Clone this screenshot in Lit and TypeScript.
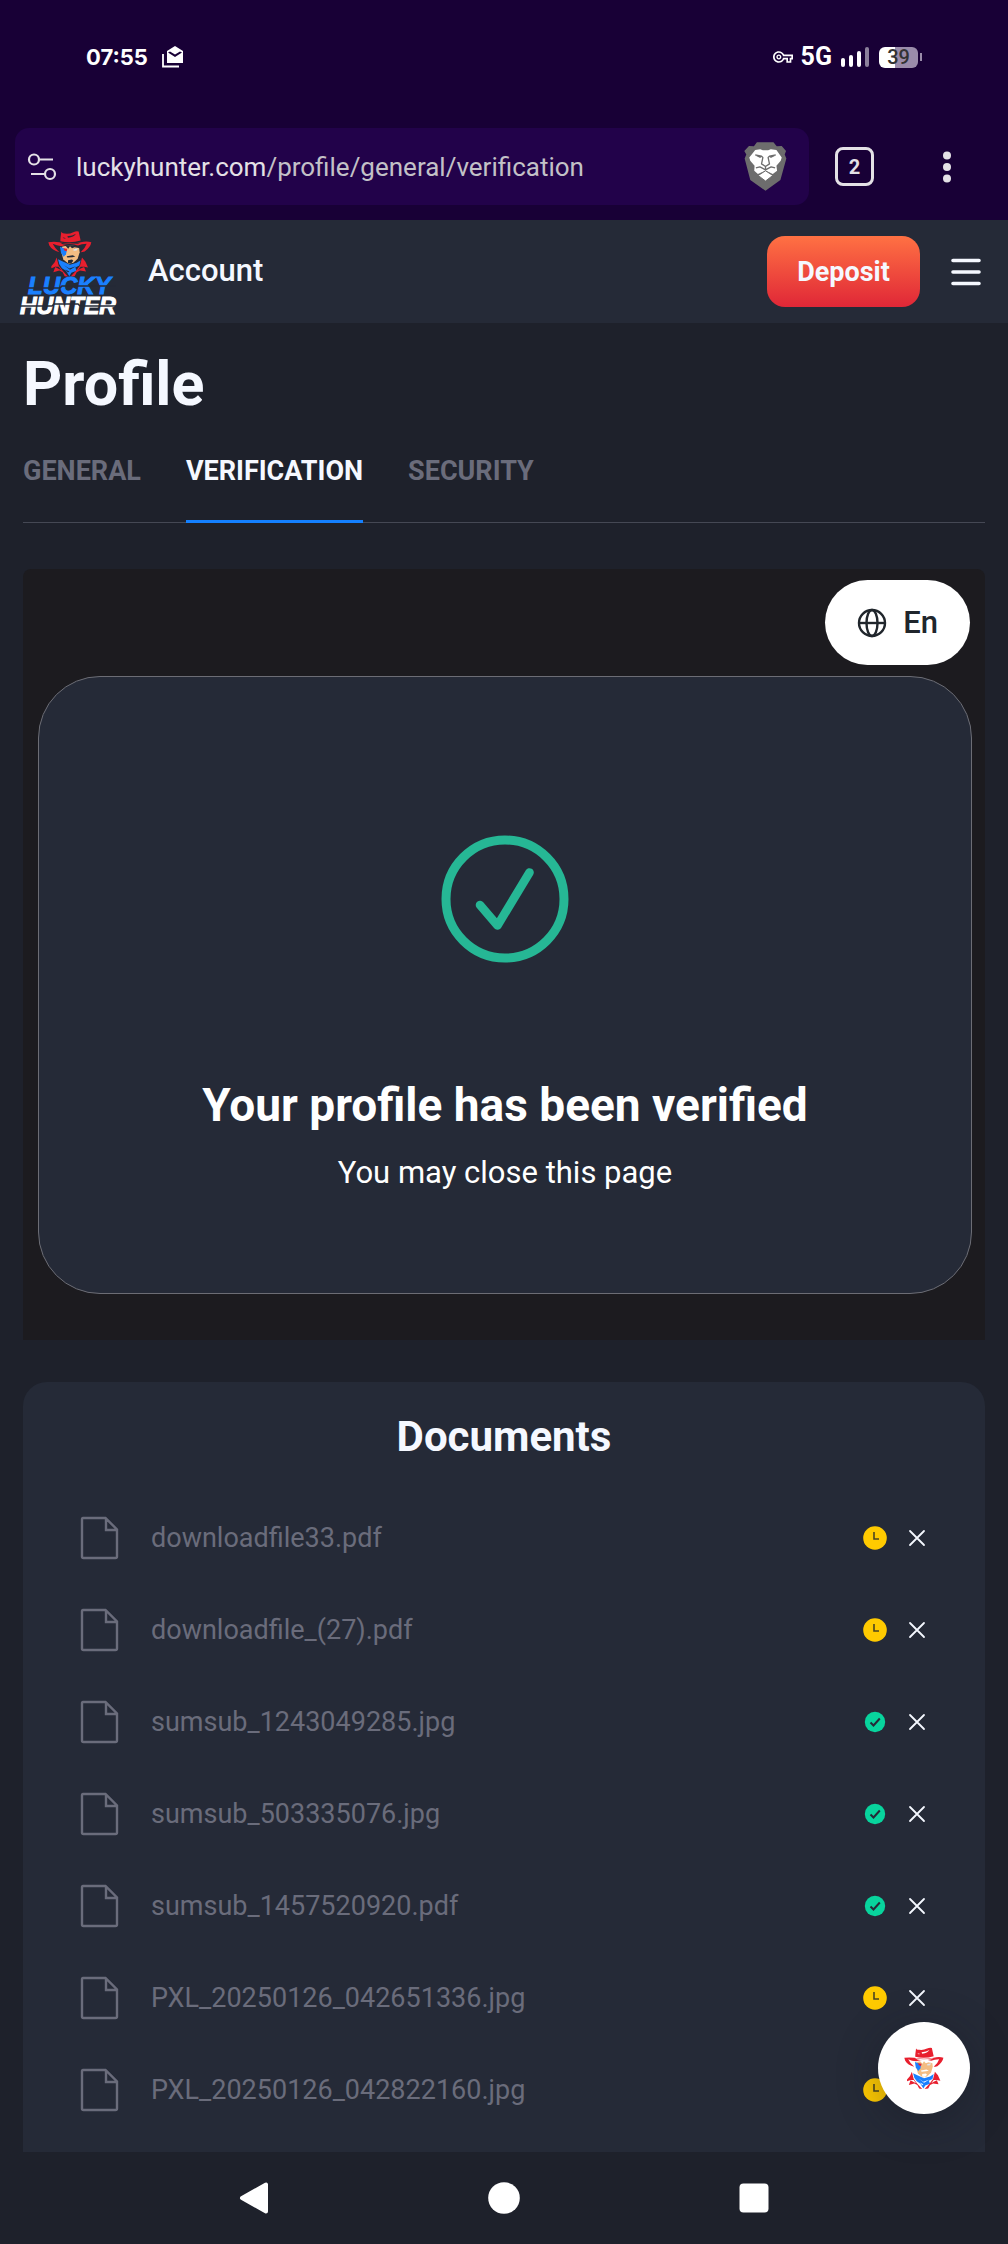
import { LitElement, html, css, svg } from "lit";
import { customElement, property } from "lit/decorators.js";

type Status = "pending" | "approved";
interface Doc {
  name: string;
  status: Status;
}

const DOCUMENTS: Doc[] = [
  { name: "downloadfile33.pdf", status: "pending" },
  { name: "downloadfile_(27).pdf", status: "pending" },
  { name: "sumsub_1243049285.jpg", status: "approved" },
  { name: "sumsub_503335076.jpg", status: "approved" },
  { name: "sumsub_1457520920.pdf", status: "approved" },
  { name: "PXL_20250126_042651336.jpg", status: "pending" },
  { name: "PXL_20250126_042822160.jpg", status: "pending" },
];

/* Cowboy head of the brand mark, drawn on a 132 x 140 grid. The cut-outs take currentColor. */
const cowboy = svg`
  <path fill="#f3bd83" d="M42 50C56 46 78 46 93 50L95 66L89 86L76 98L62 101L46 88L40 66Z"/>
  <path fill="currentColor" d="M52 46H96V54L84 52L73 58L63 59L60 55Z"/>
  <path fill="#f3bd83" d="M61 55L66 48L72 54L84 50L76 60L72 74L62 76L58 70Z"/>
  <path fill="#dfe6ef" d="M76 58L90 54L86 61L77 62Z"/>
  <path fill="#1a80ff" d="M36 50L57 58L54 72L47 80L39 68Z"/>
  <path fill="#e81f2e" d="M46 54L58 56L56 63L49 61Z"/>
  <path fill="currentColor" d="M56 78L74 75L82 79L73 81L58 82ZM60 90L72 88L76 92L70 99L60 99Z"/>
  <path fill="#1a80ff" d="M30 87L46 95L66 104L86 98L98 90L94 106L82 112L86 122L70 128L64 138L54 122L42 114L34 102Z"/>
  <path fill="currentColor" d="M48 105L64 115L84 108L66 119ZM52 118L64 124L60 127Z"/>
  <path fill="#e81f2e" d="M26 82L20 96L10 108L10 114L22 110L16 126L34 121L44 126L50 138L60 139L44 122L32 106Z"/>
  <path fill="#e81f2e" d="M102 82L112 94L120 112L108 110L114 124L96 121L86 126L80 138L68 139L84 122L96 106Z"/>
  <path fill="currentColor" d="M20 110L32 110L40 120L30 115ZM110 110L98 110L90 120L98 115Z"/>
  <path fill="#e81f2e" d="M40 2Q38 9 50 10Q64 12 76 6Q86 1 92 4Q94 14 98 31Q68 40 37 33Q37 24 39 12Z"/>
  <path fill="currentColor" d="M58 18Q74 18 84 11Q78 21 60 23ZM44 21L54 24L48 25Z"/>
  <path fill="#e81f2e" d="M1 36Q18 34 34 36Q66 43 98 36Q116 32 130 36Q128 50 110 64Q103 66 98 66Q112 54 116 41Q100 42 90 46Q64 39 40 48Q26 47 14 41Q20 54 34 66Q12 60 4 46Z"/>
  <path fill="currentColor" d="M36 37Q66 45 98 37L90 41Q66 47 44 42Z"/>`;

const lion = svg`
  <path fill="#6d6d6d" d="M38 1H88L98 13L113 12L126 27L122 38L127 50L109 115L64 147L18 115L1 50L6 38L0 27L14 12L29 13Z"/>
  <path fill="#fff" d="M33 24L48 22L56 25H72L80 22L97 24L113 47L110 57L97 72L99 87L86 97L64 86L41 97L30 87L31 72L18 57L15 47Z"/>
  <path fill="#fff" stroke="#6d6d6d" stroke-width="3" d="M64 87L86 101L64 118L42 101Z"/>
  <path fill="none" stroke="#6d6d6d" stroke-width="4" stroke-linejoin="round" d="M33 39L52 43L56 47L52 66L64 74L76 66L72 47L76 43L95 39M64 74V85M64 84L47 75L35 78M64 84L81 75L93 78"/>
  <path fill="#6d6d6d" d="M33 41L48 48L53 43ZM95 41L80 48L75 43Z"/>`;

@customElement("status-badge")
export class StatusBadge extends LitElement {
  @property() status: Status = "pending";

  static styles = css`
    :host { display: block; width: 24px; height: 24px; }
    .badge { display: block; width: 24px; height: 24px; }
  `;

  render() {
    return this.status === "pending"
      ? html`<svg class="badge" viewBox="0 0 24 24" role="img" aria-label="Pending">
          <circle cx="12" cy="12" r="11.8" fill="#ffca00" />
          <path d="M11 6v7h5" fill="none" stroke="#4b4420" stroke-width="1.6" />
        </svg>`
      : html`<svg class="badge" viewBox="0 0 24 24" role="img" aria-label="Approved">
          <circle cx="12" cy="12" r="10.2" fill="#08d49d" />
          <path d="M7.5 12.5l3 3 6.300-7" fill="none" stroke="#252a37" stroke-width="2" />
        </svg>`;
  }
}

@customElement("document-row")
export class DocumentRow extends LitElement {
  @property({ attribute: false }) doc!: Doc;

  static styles = css`
    :host { display: flex; align-items: center; height: 92px; padding: 0 56px; }
    .file { width: 40px; height: 44px; flex: none; }
    .name { flex: 1; margin-left: 32px; font-size: 27px; line-height: 36px; color: #6a6c7b; }
    .remove {
      display: flex; align-items: center; justify-content: center;
      width: 24px; height: 24px; margin-left: 18px; padding: 0; border: 0; background: none;
    }
    .cross { width: 18px; height: 18px; }
  `;

  render() {
    return html`
      <svg class="file" viewBox="0 0 40 44" fill="none" stroke="#6a6c7b" stroke-width="2.4" aria-hidden="true">
        <path d="M4 2H26.500L38 13.500V40.500Q38 42 36.500 42H4.500Q3 42 3 40.500V3.500Q3 2 4 2ZM27 2.500V14H38" />
      </svg>
      <span class="name">${this.doc.name}</span>
      <status-badge status=${this.doc.status}></status-badge>
      <button class="remove" aria-label="Remove">
        <svg class="cross" viewBox="0 0 18 18" stroke="#f5f8ff" stroke-width="1.8" stroke-linecap="round">
          <path d="M2 2l14 14M16 2L2 16" />
        </svg>
      </button>
    `;
  }
}

@customElement("app-root")
export class AppRoot extends LitElement {
  static styles = css`
    :host {
      display: flex; flex-direction: column; min-height: 100vh;
      font-family: Roboto, "Liberation Sans", sans-serif;
      background: #1e212b; color: #f5f8ff;
    }
    * { box-sizing: border-box; }
    button { font-family: inherit; border: 0; padding: 0; margin: 0; background: none; color: inherit; }
    a { color: inherit; text-decoration: none; }
    svg { display: block; flex: none; }
    h1, h2, p, ul { margin: 0; padding: 0; }

    .browser { background: #180036; }
    .status { display: flex; align-items: center; height: 114px; padding: 0 86px; }
    .time { font-family: Inter, sans-serif; font-weight: 700; font-size: 22px; line-height: 28px; color: #fff; }
    .mail { width: 22px; height: 22px; margin-left: 14px; }
    .system { display: flex; align-items: center; margin-left: auto; color: #fff; }
    .key { width: 20px; height: 20px; }
    .network { margin-left: 8px; font-weight: 700; font-size: 25px; line-height: 28px; }
    .signal { width: 28px; height: 20px; margin-left: 9px; }
    .battery {
      display: flex; align-items: center; justify-content: center;
      width: 39px; height: 21px; margin-left: 10px; border-radius: 6px;
      background: linear-gradient(90deg, #fff 16px, #9a8caa 16px);
      color: #333; font-weight: 500; font-size: 20px; line-height: 21px;
    }
    .nib { width: 2px; height: 8px; margin-left: 2px; background: #9a8caa; }

    .toolbar { display: flex; align-items: center; padding: 14px 30px 15px 15px; }
    .address {
      display: flex; align-items: center; flex: 1; height: 77px;
      padding: 0 22px 0 12px; border-radius: 14px; background: #22024a; text-align: left;
    }
    .site { width: 30px; height: 30px; }
    .url { flex: 1; margin-left: 19px; font-size: 26px; line-height: 36px; color: #c3c1c7; }
    .domain { color: #e4e1e6; }
    .lion { width: 43px; height: 49px; }
    .tabcount {
      display: flex; align-items: center; justify-content: center;
      width: 39px; height: 39px; margin-left: 26px; border: 3px solid #e4e1e6; border-radius: 8px;
      color: #e4e1e6; font-weight: 700; font-size: 20px; line-height: 24px;
    }
    .more { width: 62px; height: 40px; margin-left: 42px; }
    .dots { width: 62px; height: 40px; }

    .header { display: flex; align-items: center; height: 103px; padding: 0 27px 0 18px; background: #252a37; }
    .logo { width: 102px; height: 96px; }
    .mark { width: 102px; height: 96px; color: #252a37; }
    .word { font-family: "Liberation Sans", Arial, sans-serif; font-weight: 700; font-style: italic; }
    .section { flex: 1; margin-left: 28px; padding-bottom: 2px; font-size: 31px; line-height: 40px; font-weight: 500; }
    .deposit {
      width: 153px; height: 71px; border-radius: 18px; color: #f5f8ff;
      background: linear-gradient(#ff7143, #e02737);
      font-size: 27px; line-height: 36px; font-weight: 700;
    }
    .menu { margin-left: 31px; }
    .bars { width: 30px; height: 30px; }

    .page {
      position: relative; flex: 1; display: flex; flex-direction: column; padding: 24px 23px 0;
    }
    .title { font-size: 61px; line-height: 74px; font-weight: 700; }
    .tabs { display: flex; gap: 45px; margin-top: 26px; border-bottom: 1px solid #454854; }
    .tab {
      padding: 7px 0 31px; margin-bottom: -1px; border-bottom: 3px solid transparent;
      color: #6a6c7b; font-size: 27px; line-height: 35px; font-weight: 700;
    }
    .tab.active { color: #f5f8ff; border-color: #1480ff; }

    .verify {
      display: flex; flex-direction: column; align-items: flex-end; margin-top: 46px;
      padding: 11px 13px 46px 15px; background: #1c1b1f; border-radius: 8px 8px 0 0;
    }
    .lang {
      display: flex; align-items: center; gap: 16px; height: 85px; margin-right: 2px;
      padding: 0 32px; border-radius: 43px; background: #fff; color: #20262c;
      font-size: 31px; line-height: 40px; font-weight: 500;
    }
    .globe { width: 30px; height: 30px; }
    .card {
      display: flex; flex-direction: column; align-items: center; align-self: stretch;
      margin-top: 11px; padding: 158px 20px 100px; border: 1px solid #6c6d75; border-radius: 62px;
      background: #252a37; text-align: center;
    }
    .check { width: 128px; height: 128px; }
    .verified { margin-top: 112px; font-size: 46px; line-height: 60px; font-weight: 700; color: #fff; }
    .hint { margin-top: 18px; font-size: 31px; line-height: 40px; color: #fff; }

    .documents { flex: 1; margin-top: 42px; padding-top: 30px; border-radius: 24px 24px 0 0; background: #252a37; }
    .heading { font-size: 42px; line-height: 50px; font-weight: 700; text-align: center; margin-bottom: 30px; }
    .list { list-style: none; }

    .chat {
      position: absolute; right: 38px; bottom: 38px; width: 92px; height: 92px;
      display: flex; align-items: center; justify-content: center;
      border-radius: 50%; background: #fff; box-shadow: 0 8px 40px rgba(20, 24, 32, 0.35);
    }
    .face { width: 40px; height: 46px; color: #fff; }

    .system-nav { display: grid; grid-template-columns: repeat(3, 250px); justify-content: center; align-items: center; height: 92px; }
    .nav-button { display: flex; justify-content: center; }
    .nav-icon { width: 32px; height: 32px; }
  `;

  render() {
    return html`
      <header class="browser">
        <div class="status">
          <span class="time">07:55</span>
          <svg class="mail" viewBox="0 0 22 22" aria-hidden="true">
            <path d="M1 8V20.500H17" fill="none" stroke="#fff" stroke-width="1.8" />
            <path d="M13 0L21 5V17H5V5ZM6 6.500L13 11L20 6.500L18 5.500L13 8.500L8 5.500Z" fill="#fff" fill-rule="evenodd" />
          </svg>
          <div class="system">
            <svg class="key" viewBox="0 0 24 24" fill="#fff" aria-hidden="true">
              <path d="M22 19h-6v-4h-2.680c-1.140 2.420-3.600 4-6.320 4-3.860 0-7-3.140-7-7s3.140-7 7-7c2.720 0 5.170 1.580 6.320 4H24v6h-2v4zm-4-2h2v-4h2v-2H11.940l-.23-.67C11.010 8.340 9.110 7 7 7c-2.760 0-5 2.240-5 5s2.240 5 5 5c2.110 0 4.010-1.340 4.710-3.330l.23-.67H18v4zM7 15c-1.650 0-3-1.350-3-3s1.350-3 3-3 3 1.350 3 3-1.350 3-3 3z" />
              <circle cx="7" cy="12" r="1.4" fill="#180036" />
            </svg>
            <span class="network">5G</span>
            <svg class="signal" viewBox="0 0 28 20" fill="#fff" aria-hidden="true">
              <rect x="0" y="11" width="4" height="9" rx="2" />
              <rect x="8" y="8" width="4" height="12" rx="2" />
              <rect x="16" y="4" width="4" height="16" rx="2" />
              <rect x="24" y="0" width="4" height="20" rx="2" fill="#8b7f9b" />
            </svg>
            <span class="battery">39</span><span class="nib"></span>
          </div>
        </div>
        <div class="toolbar">
          <button class="address">
            <svg class="site" viewBox="0 0 30 30" fill="none" stroke="#e4e1e6" stroke-width="2.2" aria-hidden="true">
              <circle cx="7" cy="7.500" r="5" /><path d="M12 7.500H26M4 22H17" /><circle cx="23" cy="22" r="5" />
            </svg>
            <span class="url"><span class="domain">luckyhunter.com</span>/profile/general/verification</span>
            <svg class="lion" viewBox="0 0 128 148" aria-hidden="true">${lion}</svg>
          </button>
          <button class="tabcount" aria-label="Open tabs">2</button>
          <button class="more" aria-label="Browser menu">
            <svg class="dots" viewBox="0 0 62 40" fill="#e4e1e6">
              <circle cx="31" cy="8.500" r="4" /><circle cx="31" cy="20" r="4" /><circle cx="31" cy="31.500" r="4" />
            </svg>
          </button>
        </div>
      </header>

      <nav class="header">
        <a class="logo" href="#home" aria-label="Lucky Hunter">
          <svg class="mark" viewBox="0 -3 102 96">
            <svg x="30" y="3" width="44" height="47" viewBox="0 0 132 140">${cowboy}</svg>
            <text class="word" x="10" y="67" font-size="24" fill="#1a80ff" stroke="#1a80ff" stroke-width="1">LUCKY</text>
            <text class="word" x="2" y="87" font-size="23" fill="#fff" stroke="#fff" stroke-width="1">HUNTER</text>
            <path d="M10 61H42L44 59H98M2 79H34L36 77H60L62 79H100" fill="none" stroke="#252a37" stroke-width="1.4" />
          </svg>
        </a>
        <span class="section">Account</span>
        <button class="deposit">Deposit</button>
        <button class="menu" aria-label="Menu">
          <svg class="bars" viewBox="0 0 30 30" stroke="#f5f8ff" stroke-width="3.6" stroke-linecap="round">
            <path d="M2 3.500H28M2 15H28M2 26.500H28" />
          </svg>
        </button>
      </nav>

      <main class="page">
        <h1 class="title">Profile</h1>
        <nav class="tabs">
          <a class="tab" href="#general">GENERAL</a>
          <a class="tab active" href="#verification" aria-current="page">VERIFICATION</a>
          <a class="tab" href="#security">SECURITY</a>
        </nav>

        <section class="verify">
          <button class="lang">
            <svg class="globe" viewBox="0 0 30 30" fill="none" stroke="#20262c" stroke-width="2.400" aria-hidden="true">
              <circle cx="15" cy="15" r="13" /><ellipse cx="15" cy="15" rx="5.500" ry="13" /><path d="M2 15H28" />
            </svg>
            <span>En</span>
          </button>
          <div class="card">
            <svg class="check" viewBox="0 0 128 128" fill="none" stroke="#26b795" aria-hidden="true">
              <circle cx="64" cy="64" r="59" stroke-width="9" />
              <path d="M39 70L56.500 90.500L88.500 37.500" stroke-width="8.600" stroke-linecap="round" stroke-linejoin="round" />
            </svg>
            <h2 class="verified">Your profile has been verified</h2>
            <p class="hint">You may close this page</p>
          </div>
        </section>

        <section class="documents">
          <h2 class="heading">Documents</h2>
          <ul class="list">
            ${DOCUMENTS.map((doc) => html`<li><document-row .doc=${doc}></document-row></li>`)}
          </ul>
        </section>

        <button class="chat" aria-label="Support chat">
          <svg class="face" viewBox="0 0 132 140">${cowboy}</svg>
        </button>
      </main>

      <nav class="system-nav">
        <button class="nav-button" aria-label="Back">
          <svg class="nav-icon" viewBox="0 0 32 32" fill="#fff" stroke="#fff" stroke-width="4" stroke-linejoin="round">
            <path d="M4 16L28 2.500V29.500Z" />
          </svg>
        </button>
        <button class="nav-button" aria-label="Home">
          <svg class="nav-icon" viewBox="0 0 32 32" fill="#fff"><circle cx="16" cy="16" r="15.800" /></svg>
        </button>
        <button class="nav-button" aria-label="Recent apps">
          <svg class="nav-icon" viewBox="0 0 32 32" fill="#fff"><rect x="1.500" y="1.500" width="29" height="29" rx="4" /></svg>
        </button>
      </nav>
    `;
  }
}
